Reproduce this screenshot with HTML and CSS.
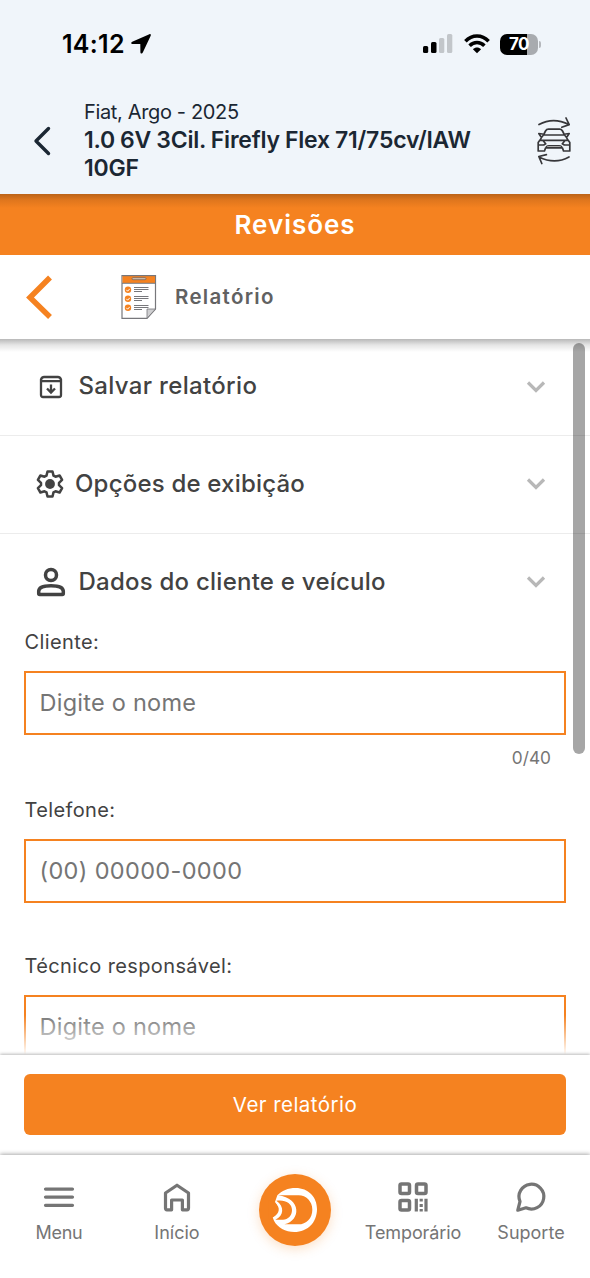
FILE: index.html
```html
<!DOCTYPE html>
<html lang="pt-BR">
<head>
<meta charset="utf-8">
<title>Revisões - Relatório</title>
<link rel="stylesheet" href="styles.css">
</head>
<body>
<div class="app">
  <header class="top">
    <div class="status">
      <span class="time">14:12</span>
      <svg class="location" width="20" height="20" viewBox="0 0 20 20"><path d="M18.400.2 1.200 7.800C-.3 8.500.2 10 1.400 10H9.300l.1 8.200c0 1.500 1.700 1.800 2.400.4L19.700 1.700c.4-1-.3-1.900-1.300-1.500z"/></svg>
      <svg class="signal" width="30" height="20" viewBox="0 0 30 20"><rect y="12" width="5.200" height="7" rx="1.500"/><rect x="8" y="8" width="5.500" height="11" rx="1.500"/><g fill="#c2c6ca"><rect x="16" y="4" width="5.300" height="15" rx="1.500"/><rect x="24" y="0" width="5.300" height="19" rx="1.500"/></g></svg>
      <svg class="wifi" width="26" height="20" viewBox="0 0 26 20"><g fill="none" stroke="#000" stroke-width="3.500"><path d="M1.400 7.300C8 .2 18 .2 24.600 7.300"/><path d="M5.600 11.700c4.200-4.300 10.600-4.300 14.800 0"/></g><path d="M8.900 15.200c2.400-2.200 5.800-2.200 8.200 0L13 19.300z"/></svg>
      <div class="battery">70</div><span class="battery-tip"></span>
    </div>
    <div class="vehicle">
      <svg class="back" width="18" height="30" viewBox="0 0 18 30"><path d="M15.500 2.500 3 15l12.500 12.500" fill="none" stroke="#1b2733" stroke-width="3.400" stroke-linecap="round" stroke-linejoin="round"/></svg>
      <div class="vehicle-text">
        <div class="model">Fiat, Argo - 2025</div>
        <div class="version"><span>1.0 6V 3Cil. Firefly Flex 71/75cv/IAW</span><br><span>10GF</span></div>
      </div>
      <svg class="car" width="36" height="50" viewBox="0 0 36 50" fill="none" stroke="#37373a" stroke-width="1.700" stroke-linejoin="round" stroke-linecap="round"><path d="M3 8.500c9-5 20-5 30 0M30 2l3.200 6.600-7.400 2.600"/><path d="M33 41c-9 5-20 5-30 0M5.800 47.500 2.800 40.500l7.600-1.800"/><path d="M7.500 19 9.500 15q1-1.800 3-1.800h11q2 0 3 1.800l2 4zM7.500 19q-2 2-3.500 5.300h4M28.500 19q2 2 3.500 5.300h-4M6.500 18l-3.700-.5 2 3M29.500 18l3.700-.5-2 3M4 24l-1.800 2.500V35H8.500l1-3h17l1 3h6.300v-8.500L32 24M8 24.300h20M2.200 29h5.500l2-1.200-3-3.500M33.800 29h-5.500l-2-1.200 3-3.500"/><path d="M10 31.500q0-2 3-2h10q3 0 3 2z" fill="#aaa" stroke-width="1.200"/></svg>
    </div>
  </header>
  <div class="section-title"><span>Revisões</span></div>
  <div class="report-bar">
    <svg class="report-back" width="26" height="44" viewBox="0 0 26 44"><path d="M24 2.500 4 22.500l20 19.500" fill="none" stroke="#f58220" stroke-width="5.500"/></svg>
    <svg class="clipboard" width="36" height="46" viewBox="0 0 36 46"><path d="M1 1.500h33.500v33.500L26 44.300H1z" fill="#fff" stroke="#77777b" stroke-width="1.200"/><path d="M1.500 2H34v7H1.500z" fill="#f58220"/><path d="M1 9.300h33.500M1 1.700h33.500" stroke="#77777b"/><rect x="11" y="3.700" width="14" height="2" rx="1" fill="#d8c5b5" stroke="#77655a" stroke-width=".8"/><path d="M34.500 35H26v9.300z" fill="#cfcfd1" stroke="#77777b" stroke-width=".8"/><g fill="#f58220"><circle cx="7" cy="15.800" r="3.200"/><circle cx="7" cy="24.800" r="3.200"/><circle cx="7" cy="33.800" r="3.200"/></g><path d="m5.400 15.800 1.200 1.400 2.200-2.400M5.400 24.800l1.200 1.400 2.200-2.400M5.400 33.800l1.200 1.400 2.200-2.400" fill="none" stroke="#fff"/><path d="M13 13.500h14.500M13 15.500h14.500M13 17.500h8M13 22.500h14.500M13 24.500h14.500M13 26.500h8M13 31.500h14.500M13 33.500h14.500M13 35.500h8" stroke="#77777b"/></svg>
    <span class="report-name">Relatório</span>
  </div>
  <main class="content">
    <div class="row">
      <svg class="icon-save" width="24" height="24" viewBox="0 0 24 24" fill="none" stroke="#424242" stroke-width="2.300"><path d="M2 4.500Q3 2 5 2h14q2 0 3 2.500V20q0 2-2 2H4q-2 0-2-2zM2 6.200h20" stroke-linejoin="round"/><path d="M12 9.500v8M8 13.500l4 4.100 4-4.100"/></svg>
      <span class="row-label save">Salvar relatório</span>
      <svg class="chevron" width="20" height="14" viewBox="0 0 20 14"><path d="m2 2.500 8 8 8-8"/></svg>
    </div>
    <div class="row">
      <svg class="icon-gear" width="28" height="28" viewBox="0 0 28 28"><path d="M11.500 1.500h5l1 4.100 2 1.100 4.100-1.200 2.500 4.300-3.100 3v2.400l3.100 3-2.500 4.300-4.100-1.200-2 1.100-1 4.100h-5l-1-4.100-2-1.100-4.100 1.200-2.500-4.300 3.100-3v-2.400l-3.100-3 2.500-4.300 4.100 1.200 2-1.100z" fill="none" stroke="#424242" stroke-width="2.500" stroke-linejoin="round"/><circle cx="14" cy="14" r="4.900" fill="#424242"/></svg>
      <span class="row-label options">Opções de exibição</span>
      <svg class="chevron" width="20" height="14" viewBox="0 0 20 14"><path d="m2 2.500 8 8 8-8"/></svg>
    </div>
    <div class="row">
      <svg class="icon-user" width="30" height="30" viewBox="0 0 30 30" fill="none" stroke="#424242" stroke-width="3.500"><circle cx="15" cy="8" r="5.500"/><path d="M2.700 26.500v-2.200C2.700 20.500 8 18.700 15 18.700s12.300 1.800 12.300 5.600v2.200q0 1-1 1H3.700q-1 0-1-1z"/></svg>
      <span class="row-label client">Dados do cliente e veículo</span>
      <svg class="chevron" width="20" height="14" viewBox="0 0 20 14"><path d="m2 2.500 8 8 8-8"/></svg>
    </div>
    <form class="form">
      <div class="label"><span>Cliente:</span></div>
      <div class="input"><span>Digite o nome</span></div>
      <div class="count"><span>0/40</span></div>
      <div class="label"><span>Telefone:</span></div>
      <div class="input phone"><span>(00) 00000-0000</span></div>
      <div class="label"><span>Técnico responsável:</span></div>
      <div class="input"><span>Digite o nome</span></div>
    </form>
    <div class="top-shade"></div>
    <div class="fade"></div>
    <div class="scrollbar"></div>
  </main>
  <div class="action"><div class="button"><span>Ver relatório</span></div></div>
  <nav class="nav">
    <div class="tab"><svg width="32" height="32" viewBox="0 0 32 32"><path d="M2.500 8.100h27M2.500 16.100h27M2.500 24.300h27" stroke="#757575" stroke-width="3.200" stroke-linecap="round"/></svg><span class="menu">Menu</span></div>
    <div class="tab"><svg width="32" height="32" viewBox="0 0 32 32"><path d="M4.500 12 16 4.200 27.500 12v15.300q0 1.500-1.500 1.500h-4.600V19H10.600v9.800H6q-1.500 0-1.500-1.500z" fill="none" stroke="#757575" stroke-width="3.200" stroke-linejoin="round"/></svg><span>Início</span></div>
    <div class="tab"><div class="brand"><svg width="72" height="72" viewBox="27 27 216 216"><path d="M82 91C95 77 114 69 137 69c38 0 64 27 64 63 0 40-28 69-68 69-26 0-51-14-61-34l-4-10c15-8 20-31 7-46z" fill="#fff"/><path d="M84 91h62c22 0 41 18 41 43 0 26-18 44-42 44h-42c50-10 52-79-19-87zM79 107c26-4 47 7 47 28 0 17-12 29-27 29H76c26-12 28-40 3-57z" fill="#f58220"/><path d="M56 106 75 114C92 126 90 146 69 157L56 164z" fill="#f58220"/></svg></div></div>
    <div class="tab"><svg width="32" height="32" viewBox="0 0 32 32"><g fill="none" stroke="#757575" stroke-width="3.500"><rect x="3" y="3" width="9.500" height="9.500" rx="1.500"/><rect x="19.500" y="3" width="9.500" height="9.500" rx="1.500"/><rect x="3" y="19.500" width="9.500" height="9.500" rx="1.500"/></g><path d="M19.300 17.800v12.700M29 17.800v12.700M24.200 17.800v2.700M24.200 23v3M24.200 28v2.500" stroke="#757575" stroke-width="3.200"/></svg><span class="temp">Temporário</span></div>
    <div class="tab"><svg width="32" height="32" viewBox="0 0 32 32"><path d="M2.800 29.200 5 20.500A12.400 12.400 0 1 1 11 26.800Z" fill="none" stroke="#757575" stroke-width="3.200" stroke-linejoin="round"/></svg><span>Suporte</span></div>
  </nav>
</div>
</body>
</html>
```
FILE: styles.css
```css
* { box-sizing: border-box; }
body { margin: 0; font-family: Inter, "Liberation Sans", sans-serif; background: #fff; color: #424242; }
svg { display: block; flex: none; }
span { white-space: nowrap; }
.app { width: 590px; height: 1278px; display: flex; flex-direction: column; overflow: hidden; }
.top { height: 194px; flex: none; background: #f0f5fa; }
.status { height: 88px; display: flex; align-items: center; padding-left: 62px; color: #000; }
.time { width: 64px; font-size: 25px; font-weight: 600; letter-spacing: .3px; }
.location { margin-left: 5px; }
.signal { margin: 0 11px 0 272px; }
.battery { width: 38px; height: 21px; margin-left: 10px; border-radius: 7px; background: linear-gradient(90deg, #000 70%, #a8abaf 70%); color: #fff; font-size: 17px; font-weight: 700; line-height: 21px; text-align: center; letter-spacing: -.5px; }
.battery-tip { width: 2px; height: 7px; margin-left: 1px; background: #b5b8bc; border-radius: 0 2px 2px 0; }
.vehicle { height: 106px; display: flex; padding-left: 33px; color: #1b2733; }
.back { margin-top: 38px; }
.vehicle-text { width: 453px; padding: 10px 0 0 33px; flex: none; }
.model { font-size: 20px; line-height: 28px; letter-spacing: -.35px; }
.version { font-size: 23px; line-height: 28px; font-weight: 600; letter-spacing: -.2px; word-spacing: -.500px; }
.car { margin-top: 28px; margin-left: 32px; }
.section-title { height: 61px; flex: none; display: flex; align-items: center; justify-content: center; background: linear-gradient(#bb6318, #df761d 6px, #f58220 14px); color: #fff; font-size: 26px; font-weight: 600; letter-spacing: .95px; }
.report-bar { height: 84px; flex: none; display: flex; align-items: center; padding-left: 26px; background: #fff; }
.clipboard { margin-left: 69px; }
.report-name { margin: -1px 0 0 18px; font-size: 20.500px; font-weight: 600; letter-spacing: 1.300px; color: #616161; }
.content { height: 716px; flex: none; position: relative; overflow: hidden; }
.top-shade { position: absolute; top: 0; left: 0; right: 0; height: 13px; background: linear-gradient(rgba(0,0,0,.28), rgba(0,0,0,.1) 6px, transparent); }
.row { height: 97.500px; display: flex; align-items: center; padding: 0 44px 0 36px; border-bottom: 1.500px solid #ececec; }
.row:first-child { height: 97px; }
.row:nth-child(3) { height: 96.500px; border: 0; }
.row-label { font-size: 24px; font-weight: 500; line-height: 30px; margin-top: -1px; letter-spacing: .24px; }
.save { letter-spacing: .33px; margin-top: -2px; }
.options { letter-spacing: .2px; }
.client { margin-top: 0; }
.icon-save { margin: 0 15.500px 0 3px; }
.icon-gear { margin-right: 11px; }
.icon-user { margin-right: 12.500px; }
.chevron { margin-left: auto; fill: none; stroke: #b8b8b8; stroke-width: 3.200; }
.form { padding: 0 24px; }
.label { height: 28px; margin-bottom: 14.500px; margin-top: -2px; line-height: 28px; font-size: 20px; letter-spacing: .38px; padding-left: .5px; }
.input { height: 64px; border: 2px solid #f58220; padding-left: 13.500px; line-height: 60px; font-size: 23.500px; letter-spacing: .25px; color: #757575; }
.count { height: 46px; margin-bottom: 17.500px; padding: 0 15px; text-align: right; line-height: 45px; font-size: 17.300px; color: #757575; }
.phone { margin-bottom: 51.500px; letter-spacing: .35px; }
.fade { position: absolute; left: 0; right: 0; bottom: 0; height: 40px; background: linear-gradient(rgba(255,255,255,0), #fff); }
.scrollbar { position: absolute; top: 4px; right: 5px; width: 12px; height: 411px; border-radius: 6px; background: rgba(0,0,0,.35); }
.action { height: 100px; flex: none; padding: 19px 24px 20px; box-shadow: 0 -1px 3px #bbb; background: #fff; position: relative; }
.button { height: 61px; border-radius: 6px; background: #f58220; color: #fff; display: flex; align-items: center; justify-content: center; font-size: 20.500px; letter-spacing: .45px; }
.nav { height: 123px; flex: none; display: flex; background: #fff; position: relative; box-shadow: 0 -1px 4px #aaa; }
.tab { width: 118px; flex: none; display: flex; flex-direction: column; align-items: center; padding-top: 26px; color: #757575; font-size: 18px; line-height: 24px; }
.tab > span { margin-top: 8px; }
.menu { letter-spacing: -.3px; }
.temp { letter-spacing: -.1px; }
.brand { width: 72px; height: 72px; margin-top: -7px; border-radius: 50%; background: #f58220; overflow: hidden; box-shadow: 0 3px 12px #f5822040; }
```
